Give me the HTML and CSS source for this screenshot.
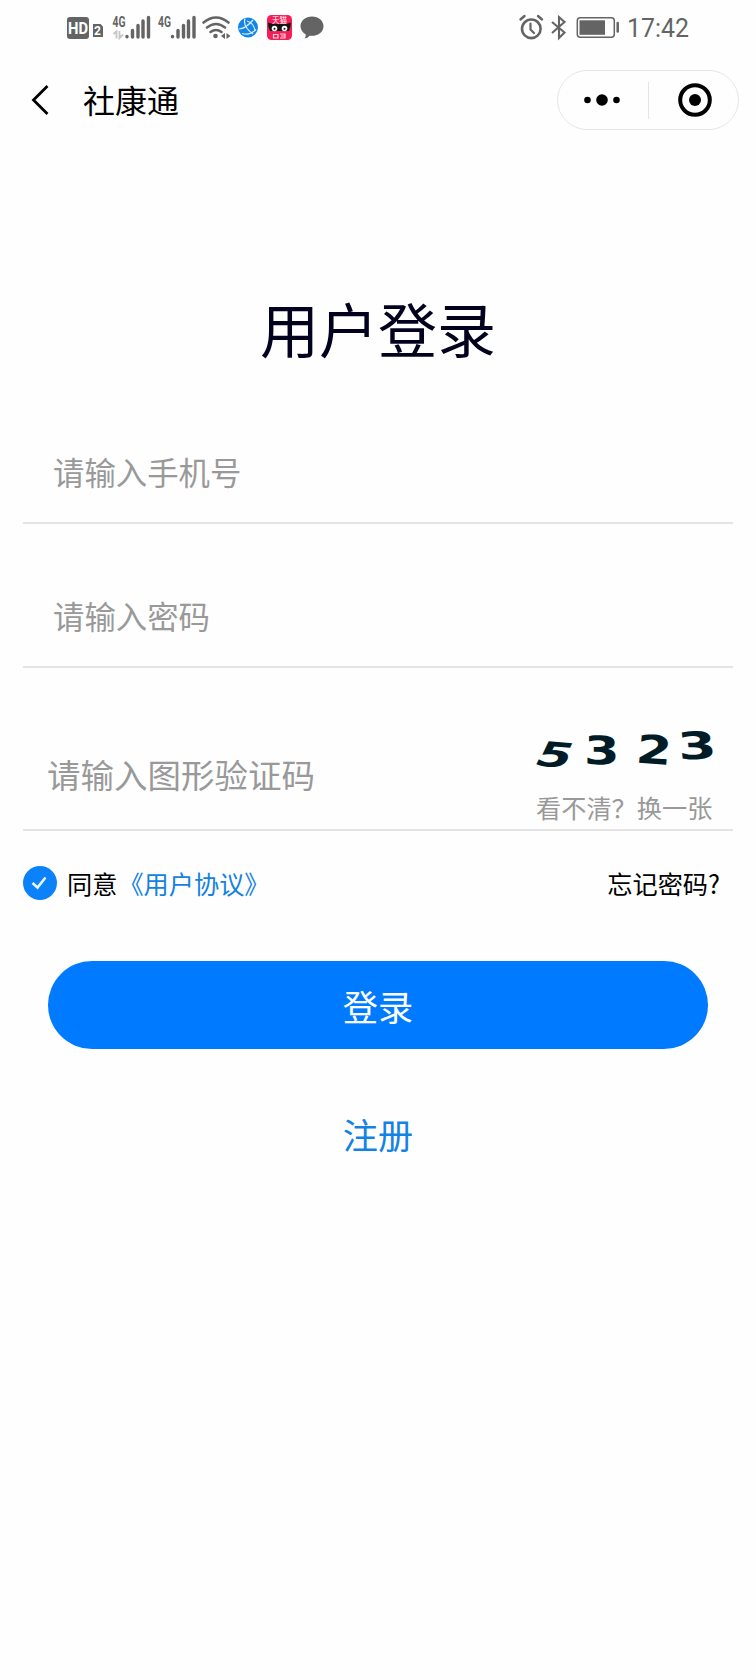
FILE: index.html
```html
<!DOCTYPE html>
<html lang="zh-CN">
<head>
<meta charset="utf-8">
<title>社康通</title>
<link rel="stylesheet" href="styles.css">
</head>
<body>
<div class="status">
  <svg class="status-left" width="270" height="54" viewBox="60 0 270 54">
    <rect x="67" y="17" width="22" height="22" rx="3" fill="#646464"/>
    <text class="hd" x="68" y="33.5" textLength="20" lengthAdjust="spacingAndGlyphs">HD</text>
    <path d="M93 24h7.500l2.500 2.500V37h-10z" fill="#646464"/>
    <text class="sim" x="94" y="35.300">2</text>
    <g id="signal">
      <text class="net" x="112.500" y="26.500" textLength="13" lengthAdjust="spacingAndGlyphs">4G</text>
      <g stroke="#646464" stroke-width="3.400" stroke-linecap="round">
        <path d="M127 36.500v.2M132.500 30.500v6.500M138 25.500v11.500M143 21v16M148.500 17.500v19.500"/>
      </g>
    </g>
    <use href="#signal" x="45.500"/>
    <path d="M113.500 34l3-2.500v7M119.500 31v7l3.500-3.500" fill="none" stroke="#c5c5c5" stroke-width="1.800"/>
    <g fill="none" stroke="#646464" stroke-width="2.600" stroke-linecap="round">
      <path d="M203.500 22.500q12.500-10 25 0M207 27.500q9-7 18 0M210.500 32q5.500-4 11 0"/>
    </g>
    <circle cx="215.500" cy="36" r="2.300" fill="#646464"/>
    <path d="M225 33v6l-4-3zM226.500 33v6l4-3z" fill="#646464"/>
    <circle cx="248" cy="27.500" r="10" fill="#1485e6"/>
    <path d="M245 18.500q-2.500 8 8 15.500M239 29q7-.5 14-9M242 33.500q8 2.500 14-4M247 21q7 2 8 10" fill="none" stroke="#d9efff" stroke-width="1.200"/>
    <rect x="267" y="15" width="25" height="25" rx="4.500" fill="#f51e58"/>
    <text class="tmall" x="272" y="22.700">天猫</text>
    <path d="M268 22.500l5 1.500h13l5-1.500q-.5 5-2 8.500h-19q-2-3.500-2-8.500z" fill="#151515"/>
    <g fill="#fff"><circle cx="274.500" cy="28.500" r="2.800"/><circle cx="284.500" cy="28.500" r="2.800"/></g>
    <g fill="#151515"><circle cx="274.500" cy="28.800" r="1"/><circle cx="284.500" cy="28.800" r="1"/></g>
    <path d="M273.500 34.500h4.500v3.500h-4.500zM280 34h5v4h-5M281 36h4" fill="none" stroke="#ffd5e0" stroke-width="1.200"/>
    <path d="M312 16.500c6.700 0 11.500 4.300 11.500 9.700s-4.800 9.600-11.500 9.600h-2.500q-1.500 2.500-5 2.700 1.500-2 1.300-4.100c-3-1.700-5.300-4.500-5.300-8.200 0-5.400 4.800-9.700 11.500-9.700z" fill="#646464"/>
  </svg>
  <svg class="status-right" width="190" height="54" viewBox="510 0 190 54">
    <g fill="none" stroke="#646464">
      <circle cx="531.300" cy="28.800" r="9.300" stroke-width="2.600"/>
      <path d="M530.500 23.500v6l3.500 3.500" stroke-width="2.200" stroke-linecap="round" stroke-linejoin="round"/>
      <path d="M520.500 19.500l4-3.500M538 16l4 3.500" stroke-width="2.400" stroke-linecap="round"/>
      <path d="M552 22l12.500 10.500-5.500 5.500V17l5.500 5-12.500 11" stroke-width="2.100"/>
      <rect x="577.300" y="17.800" width="37" height="19.400" rx="3" stroke-width="1.500"/>
      <path d="M617.700 23v8.500" stroke-width="2.500" stroke-linecap="round"/>
    </g>
    <rect x="579.500" y="20.300" width="25.500" height="14.500" fill="#646464"/>
    <text class="clock" x="627" y="37" textLength="62" lengthAdjust="spacingAndGlyphs">17:42</text>
  </svg>
</div>
<header class="nav">
  <svg class="back" width="20" height="34" viewBox="0 0 20 34"><path d="M17.500 3L3.500 17l14 14" fill="none" stroke="#000" stroke-width="2.800"/></svg>
  <div class="nav-title">社康通</div>
  <div class="capsule">
    <svg width="38" height="14" viewBox="0 0 38 14"><circle cx="4.500" cy="7" r="3.300"/><circle cx="19" cy="7" r="5.800"/><circle cx="33.500" cy="7" r="3.300"/></svg>
    <span class="divider"></span>
    <svg width="34" height="34" viewBox="0 0 34 34"><circle cx="17" cy="17" r="14.800" fill="none" stroke="#000" stroke-width="4"/><circle cx="17" cy="17" r="6"/></svg>
  </div>
</header>
<main class="login">
  <h1 class="title">用户登录</h1>
  <div class="field phone">请输入手机号</div>
  <div class="field password">请输入密码</div>
  <div class="field verify">
    <span class="verify-hint">请输入图形验证码</span>
    <div class="captcha">
      <svg width="190" height="60" viewBox="530 720 190 60">
        <g class="digits">
          <text transform="matrix(1.36 .12 -.42 .9 532 765)">5</text>
          <text transform="matrix(1.38 .02 0 1.06 584 764)">3</text>
          <text transform="matrix(1.38 .1 -.1 1.06 635 762.500)">2</text>
          <text transform="matrix(1.5 -.04 .1 1.02 679 759.500)">3</text>
        </g>
      </svg>
      <span class="refresh">看不清？换一张</span>
    </div>
  </div>
  <div class="options">
    <svg class="check" width="34" height="34" viewBox="0 0 34 34"><circle cx="17" cy="17" r="17" fill="#0b82fa"/><path d="M9.500 17l5 4.500 8-10" fill="none" stroke="#e5f4ff" stroke-width="2.600"/></svg>
    <span class="agree">同意</span>
    <a class="link">《用户协议》</a>
    <span class="forgot">忘记密码?</span>
  </div>
  <div class="submit">登录</div>
  <a class="register">注册</a>
</main>
</body>
</html>
```
FILE: styles.css
```css
* { box-sizing: border-box; }
body {
  margin: 0;
  min-height: 1680px;
  background: #fefefe;
  color: #000;
  font-family: "Noto Sans CJK SC", sans-serif;
}
svg { display: block; flex: none; overflow: visible; }
.status { display: flex; justify-content: space-between; height: 54px; padding: 0 56px 0 60px; }
.hd { font: bold 16px Roboto, sans-serif; fill: #fff; }
.sim { font: bold 12px Roboto, sans-serif; fill: #fff; }
.net { font: bold 14px Roboto, sans-serif; fill: #646464; }
.tmall { font-size: 7.500px; fill: #fff; }
.clock { font: 26px Roboto, sans-serif; fill: #646464; }
.nav { display: flex; align-items: center; height: 92px; padding: 0 17px 0 30px; }
.back { margin-top: -1px; }
.nav-title { flex: 1; margin-left: 33px; padding-bottom: 3px; font-size: 32px; line-height: 48px; }
.capsule {
  display: flex;
  align-items: center;
  width: 182px;
  height: 60px;
  padding: 0 26px 0 25px;
  border: 1.500px solid #e6e6e6;
  border-radius: 30px;
  justify-content: space-between;
}
.divider { width: 1px; height: 37px; margin-right: 3px; background: #e4e4e4; }
.login { padding: 0 23px; }
.title {
  margin: 138px 0 0;
  color: #02021e;
  font-size: 59px;
  font-weight: 400;
  line-height: 88px;
  text-align: center;
}
.field {
  display: flex;
  align-items: center;
  border-bottom: 2px solid #e4e4e4;
  color: #999;
  font-size: 31.400px;
  line-height: 48px;
}
.phone { height: 89px; margin-top: 63px; padding: 0 0 14px 30px; }
.password { height: 144px; padding: 42px 0 0 30px; }
.verify { height: 163px; justify-content: space-between; align-items: flex-end; padding: 0 13px 0 24px; font-size: 33.500px; }
.verify-hint { padding-bottom: 31px; }
.captcha { display: flex; flex-direction: column; gap: 9px; width: 190px; }
.digits { font: bold 37px "DejaVu Sans", sans-serif; fill: #021c27; }
.refresh { margin-left: 6px; font-size: 25.200px; line-height: 36px; padding-bottom: 4px; white-space: nowrap; }
.options { display: flex; align-items: center; height: 36px; margin-top: 34px; font-size: 25.200px; line-height: 36px; }
.agree { margin-left: 10px; }
.link { margin-left: 1px; color: #1482e2; }
.forgot { margin-left: auto; padding-right: 13px; }
.submit {
  height: 88px;
  margin: 60px 25px 0;
  border-radius: 44px;
  background: #007bff;
  color: #fff;
  font-size: 35.200px;
  line-height: 90px;
  text-align: center;
}
.register { display: block; margin-top: 59px; color: #1482e2; font-size: 35.200px; line-height: 52px; text-align: center; }
```
